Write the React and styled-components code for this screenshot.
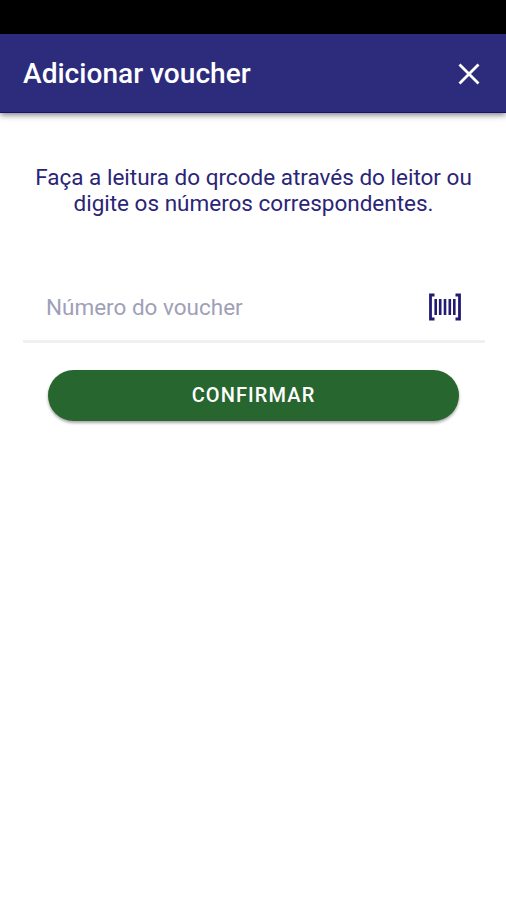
import React, { useState } from "react";
import styled, { createGlobalStyle } from "styled-components";

function App() {
  const [voucher, setVoucher] = useState("");

  return (
    <Screen>
      <GlobalStyle />
      <StatusBar />
      <Header>
        <h1>Adicionar voucher</h1>
        <CloseButton aria-label="Fechar">
          <svg width="22" height="22" viewBox="0 0 22 22">
            <path d="M1.5 1.5 L20.5 20.5 M20.5 1.5 L1.5 20.5" />
          </svg>
        </CloseButton>
      </Header>
      <Content>
        <Message>
          <span>Faça a leitura do qrcode através do leitor ou</span>
          <span>digite os números correspondentes.</span>
        </Message>
        <Field>
          <input
            type="text"
            placeholder="Número do voucher"
            value={voucher}
            onChange={(e) => setVoucher(e.target.value)}
          />
          <ScanButton aria-label="Ler código">
            <svg width="32" height="28" viewBox="0 0 32 28">
              <path d="M5.5 2 H1.5 V26 H5.5 M26.5 2 H30.5 V26 H26.5" />
              <path
                className="bars"
                d="M6.7 6 V22 M11.2 6 V22 M16 6 V22 M20.8 6 V22 M25.3 6 V22"
              />
            </svg>
          </ScanButton>
        </Field>
        <ConfirmButton>Confirmar</ConfirmButton>
      </Content>
    </Screen>
  );
}

const GlobalStyle = createGlobalStyle`
  * {
    box-sizing: border-box;
  }

  body {
    margin: 0;
    background: #fff;
    font-family: Roboto, sans-serif;
  }
`;

const Screen = styled.div`
  min-height: 100vh;
  background: #fff;
`;

const StatusBar = styled.div`
  height: 34px;
  background: #000;
`;

const Header = styled.header`
  height: 79px;
  padding: 2px 26px 0 23px;
  display: flex;
  justify-content: space-between;
  align-items: center;
  background: #2d2b7c;
  border-bottom: 1px solid #17126a;
  box-shadow: 0 2px 6px rgba(0, 0, 0, 0.5);

  & > h1 {
    margin: 0 0 2px;
    color: #fff;
    font-size: 28.1px;
    font-weight: 500;
  }
`;

const CloseButton = styled.button`
  padding: 0;
  border: none;
  background: transparent;
  display: flex;

  & path {
    stroke: #fff;
    stroke-width: 2.8;
  }
`;

const Content = styled.main`
  padding: 51px 21px 0 23px;
`;

const Message = styled.p`
  margin: 0 1px 0 0;
  display: flex;
  flex-direction: column;
  align-items: center;
  color: #2a2577;
  font-size: 22.5px;
  line-height: 26px;
  white-space: nowrap;
`;

const Field = styled.div`
  height: 70px;
  margin-top: 57px;
  padding: 0 24px 0 23px;
  display: flex;
  align-items: center;
  border-bottom: 3px solid #f0f0f1;

  & > input {
    flex: 1;
    min-width: 0;
    padding: 0;
    border: none;
    outline: none;
    background: transparent;
    color: #2a2577;
    font-family: inherit;
    font-size: 22.5px;

    &::placeholder {
      color: #a09fb8;
    }
  }
`;

const ScanButton = styled(CloseButton)`
  & path {
    fill: none;
    stroke: #211b72;
  }

  & .bars {
    stroke-width: 2.6;
  }
`;

const ConfirmButton = styled.button`
  display: block;
  width: 411px;
  height: 51px;
  margin: 27px 0 0 25px;
  padding: 0 0 1px;
  border: none;
  border-radius: 26px;
  background: #28662f;
  color: #fff;
  font-family: inherit;
  font-size: 20px;
  font-weight: 500;
  letter-spacing: 1.1px;
  text-transform: uppercase;
  box-shadow: 0 2px 3px rgba(0, 0, 0, 0.35);
`;

export default App;
